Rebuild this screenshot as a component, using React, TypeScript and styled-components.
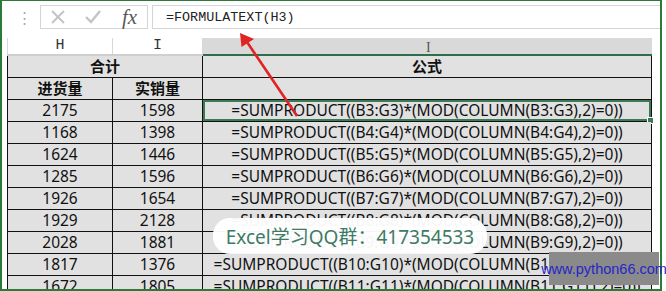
import styled, { createGlobalStyle } from "styled-components";

const GlobalStyle = createGlobalStyle`
  html, body {
    margin: 0;
    padding: 0;
    background: #ffffff;
  }
  body {
    font-family: "Noto Sans", "Noto Sans CJK SC", sans-serif;
  }
`;

const Page = styled.div`
  position: relative;
  width: 666px;
  height: 291px;
  overflow: hidden;
  background: #ffffff;
`;

const Frame = styled.div`
  box-sizing: border-box;
  width: 662px;
  height: 291px;
  border: 2px solid #2a7a38;
  border-top-width: 1px;
  overflow: hidden;
`;

const FormulaBar = styled.div`
  display: flex;
  align-items: stretch;
  height: 24px;
  margin-top: 4px;
`;

const Grip = styled.div`
  width: 38px;
  display: flex;
  align-items: center;
  justify-content: center;
  padding-left: 6px;
  box-sizing: border-box;
  color: #a8a8a8;
  font-size: 15px;
`;

const ButtonBox = styled.div`
  width: 108px;
  box-sizing: border-box;
  border: 1px solid #d4d4d4;
  display: flex;
  align-items: center;
  padding-left: 9px;
  gap: 18px;
`;

const Fx = styled.span`
  font-family: "Liberation Serif", serif;
  font-style: italic;
  font-size: 21px;
  color: #5a5a5a;
  margin-left: 2px;
  line-height: 1;
`;

const FormulaInput = styled.div`
  flex: 1;
  margin-left: 4px;
  border: 1px solid #d4d4d4;
  border-right: none;
  display: flex;
  align-items: center;
  padding-left: 13px;
  font-family: "Liberation Mono", monospace;
  font-size: 13.4px;
  color: #222;
`;

const Sheet = styled.div`
  margin-top: 9px;
  padding-left: 5px;
`;

const Grid = styled.table`
  border-collapse: collapse;
  table-layout: fixed;
  width: 650px;
`;

const ColHead = styled.th<{ $active?: boolean }>`
  height: 16px;
  padding: 0;
  font-family: "Liberation Mono", monospace;
  font-weight: normal;
  font-size: 15px;
  line-height: 16px;
  color: #333;
  background: ${(p) => (p.$active ? "#d9d9d9" : "#ffffff")};
  border-left: 1px solid #d8d8d8;
  border-bottom: 2px solid ${(p) => (p.$active ? "#2f6e4a" : "#cfcfcf")};
  position: relative;
`;

const Cursor = styled.span`
  position: absolute;
  left: 223px;
  top: 3px;
  font-family: "Liberation Serif", serif;
  font-size: 14px;
  color: #555;
  line-height: 1;
`;

const Cell = styled.td<{ $bold?: boolean; $selected?: boolean }>`
  height: 21px;
  padding: 0;
  border: 1px solid #111;
  background: #e1e1e1;
  text-align: center;
  white-space: nowrap;
  overflow: visible;
  font-size: ${(p) => (p.$bold ? "15px" : "15.5px")};
  font-weight: ${(p) => (p.$bold ? 700 : 400)};
  color: #111;
  line-height: 21px;
  position: relative;
  box-shadow: ${(p) => (p.$selected ? "inset 0 0 0 2px #3b7a55" : "none")};
  &::after {
    content: "";
    display: ${(p) => (p.$selected ? "block" : "none")};
    position: absolute;
    right: -3px;
    bottom: -3px;
    width: 5px;
    height: 5px;
    background: #3b7a55;
    border: 1px solid #fff;
  }
`;

const Pill = styled.div`
  position: absolute;
  left: 213px;
  top: 218px;
  width: 274px;
  height: 36px;
  border-radius: 17px;
  background: rgba(255, 255, 255, 0.96);
  display: flex;
  align-items: center;
  justify-content: center;
  font-family: "Noto Sans", "Noto Sans CJK SC", sans-serif;
  font-size: 19px;
  color: #3f7a66;
`;

const Watermark = styled.div`
  position: absolute;
  left: 549px;
  top: 252px;
  width: 110px;
  height: 33px;
  background: #8a8a8a;
  display: flex;
  align-items: center;
  justify-content: center;
  font-family: "Liberation Sans", sans-serif;
  font-size: 14.5px;
  color: #2626c8;
`;

const ArrowLayer = styled.svg`
  position: absolute;
  left: 0;
  top: 0;
  pointer-events: none;
`;

const hValues = ["2175", "1168", "1624", "1285", "1926", "1929", "2028", "1817", "1672"];
const iValues = ["1598", "1398", "1446", "1596", "1654", "2128", "1881", "1376", "1805"];

function App() {
  return (
    <Page>
      <GlobalStyle />
      <Frame>
        <FormulaBar>
          <Grip>⋮</Grip>
          <ButtonBox>
            <svg width="16" height="16" viewBox="0 0 16 16">
              <path d="M2 2 L14 14 M14 2 L2 14" stroke="#c4c4c4" strokeWidth="2" fill="none" />
            </svg>
            <svg width="18" height="16" viewBox="0 0 18 16">
              <path d="M2 8 L7 13 L16 2" stroke="#c4c4c4" strokeWidth="2.4" fill="none" />
            </svg>
            <Fx>fx</Fx>
          </ButtonBox>
          <FormulaInput>=FORMULATEXT(H3)</FormulaInput>
        </FormulaBar>
        <Sheet>
          <Grid>
            <colgroup>
              <col style={{ width: 105 }} />
              <col style={{ width: 90 }} />
              <col style={{ width: 449 }} />
              <col />
            </colgroup>
            <thead>
              <tr>
                <ColHead>H</ColHead>
                <ColHead>I</ColHead>
                <ColHead $active>
                  <Cursor>I</Cursor>
                </ColHead>
                <th />
              </tr>
            </thead>
            <tbody>
              <tr>
                <Cell $bold colSpan={2}>合计</Cell>
                <Cell $bold>公式</Cell>
              </tr>
              <tr>
                <Cell $bold>进货量</Cell>
                <Cell $bold>实销量</Cell>
                <Cell />
              </tr>
              {hValues.map((h, i) => {
                const r = i + 3;
                return (
                  <tr key={r}>
                    <Cell>{h}</Cell>
                    <Cell>{iValues[i]}</Cell>
                    <Cell $selected={r === 3}>
                      {`=SUMPRODUCT((B${r}:G${r})*(MOD(COLUMN(B${r}:G${r}),2)=0))`}
                    </Cell>
                  </tr>
                );
              })}
            </tbody>
          </Grid>
        </Sheet>
      </Frame>
      <ArrowLayer width="666" height="291" viewBox="0 0 666 291">
        <line x1="297" y1="116" x2="247" y2="42" stroke="#e02424" strokeWidth="2.6" />
        <polygon points="240,33 241.5,47 254,39" fill="#e02424" />
      </ArrowLayer>
      <Pill>Excel学习QQ群：417354533</Pill>
      <Watermark>www.python66.com</Watermark>
    </Page>
  );
}

export default App;
